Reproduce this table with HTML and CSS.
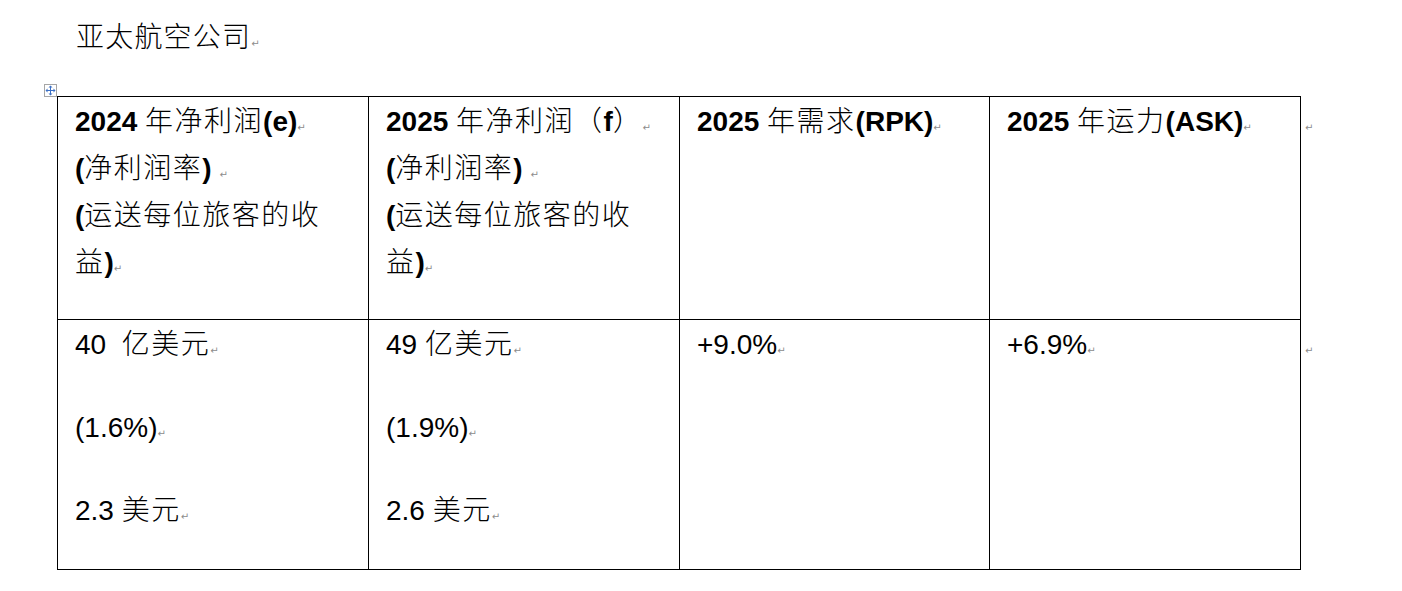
FILE: index.html
```html
<!DOCTYPE html>
<html lang="zh-CN">
<head>
<meta charset="utf-8">
<title>亚太航空公司</title>
<link rel="stylesheet" href="styles.css">
</head>
<body>
<div class="title"><span class="zh">亚太航空公司</span><span class="pm">↵</span></div>
<div class="table-wrap">
  <span class="move-handle">
    <svg width="13" height="13" viewBox="0 0 13 13">
      <rect x="0.5" y="0.5" width="12" height="12" fill="#fff" stroke="#a6a6a6"/>
      <path d="M6.5 3v7M3 6.5h7" stroke="#3b6fc4" stroke-width="1" fill="none"/>
      <path d="M6.5 1.5l2 2h-4z M6.5 11.5l2-2h-4z M1.5 6.5l2-2v4z M11.5 6.5l-2-2v4z" fill="#3b6fc4"/>
    </svg>
  </span>
  <table class="stats">
    <colgroup>
      <col class="c1"><col class="c2"><col class="c3"><col class="c4"><col class="c5">
    </colgroup>
    <tr class="row-head">
      <td>
        <p class="nw"><b>2024 </b><span class="zh">年净利润</span><b>(e)</b><span class="pm">↵</span></p>
        <p class="nw"><b>(</b><span class="zh">净利润率</span><b>) </b><span class="pm">↵</span></p>
        <p class="nw"><b>(</b><span class="zh">运送每位旅客的收</span></p>
        <p class="nw"><span class="zh">益</span><b>)</b><span class="pm">↵</span></p>
      </td>
      <td>
        <p class="nw"><b>2025 </b><span class="zh">年净利润（</span><b>f</b><span class="zh">）</span><span class="pm">↵</span></p>
        <p class="nw"><b>(</b><span class="zh">净利润率</span><b>) </b><span class="pm">↵</span></p>
        <p class="nw"><b>(</b><span class="zh">运送每位旅客的收</span></p>
        <p class="nw"><span class="zh">益</span><b>)</b><span class="pm">↵</span></p>
      </td>
      <td>
        <p class="nw"><b>2025 </b><span class="zh">年需求</span><b>(RPK)</b><span class="pm">↵</span></p>
      </td>
      <td>
        <p class="nw"><b>2025 </b><span class="zh">年运力</span><b>(ASK)</b><span class="pm">↵</span></p>
      </td>
      <td class="eor"><p><span class="pm">↵</span></p></td>
    </tr>
    <tr class="row-vals">
      <td>
        <p>40&nbsp; <span class="zh">亿美元</span><span class="pm">↵</span></p>
        <p>(1.6%)<span class="pm">↵</span></p>
        <p>2.3 <span class="zh">美元</span><span class="pm">↵</span></p>
      </td>
      <td>
        <p>49 <span class="zh">亿美元</span><span class="pm">↵</span></p>
        <p>(1.9%)<span class="pm">↵</span></p>
        <p>2.6 <span class="zh">美元</span><span class="pm">↵</span></p>
      </td>
      <td>
        <p>+9.0%<span class="pm">↵</span></p>
      </td>
      <td>
        <p>+6.9%<span class="pm">↵</span></p>
      </td>
      <td class="eor"><p><span class="pm">↵</span></p></td>
    </tr>
  </table>
  <span class="resize-handle"></span>
</div>
</body>
</html>
```

FILE: styles.css
```css
html, body {
  margin: 0;
  background: #ffffff;
}

body {
  font-family: "Liberation Sans", "Noto Sans CJK SC", sans-serif;
  color: #000000;
}

.title {
  padding: 20px 0 0 76px;
  height: 36px;
  font-size: 28px;
  line-height: 36px;
}

.zh {
  font-family: "Noto Sans CJK SC", sans-serif;
  font-weight: 300;
  letter-spacing: 1.5px;
  line-height: 1;
}

.title .zh {
  letter-spacing: 1.2px;
}

.pm {
  font-family: "DejaVu Sans", sans-serif;
  font-size: 10px;
  font-weight: 400;
  color: #8c8c8c;
  letter-spacing: 0;
  line-height: 1;
}

.table-wrap {
  position: relative;
  margin: 40px 0 0 57px;
  width: max-content;
}

.move-handle {
  position: absolute;
  left: -13px;
  top: -12px;
  width: 13px;
  height: 13px;
  line-height: 0;
}

.resize-handle {
  position: absolute;
  left: 1243px;
  top: 475px;
  width: 5px;
  height: 5px;
  border: 1px solid #7a7a7a;
  background: #ffffff;
  z-index: 1;
}

.stats {
  border-collapse: collapse;
  table-layout: fixed;
  width: 1273px;
  font-size: 28px;
}

.stats .c1 { width: 311px; }
.stats .c2 { width: 311px; }
.stats .c3 { width: 310px; }
.stats .c4 { width: 311px; }
.stats .c5 { width: 30px; }

.stats td {
  border: 1px solid #000000;
  vertical-align: top;
  padding: 1px 30px 0 17px;
}

.stats td.eor {
  border: none;
  padding: 1px 0 0 4px;
}

.stats p {
  margin: 0;
  line-height: 47px;
}

.stats p.nw {
  white-space: nowrap;
}

.stats b {
  font-weight: 700;
}

.row-head td {
  height: 221px;
}

.row-vals td {
  height: 248px;
}

.row-vals p {
  margin-bottom: 36px;
}

.row-vals p:last-child {
  margin-bottom: 0;
}
```
